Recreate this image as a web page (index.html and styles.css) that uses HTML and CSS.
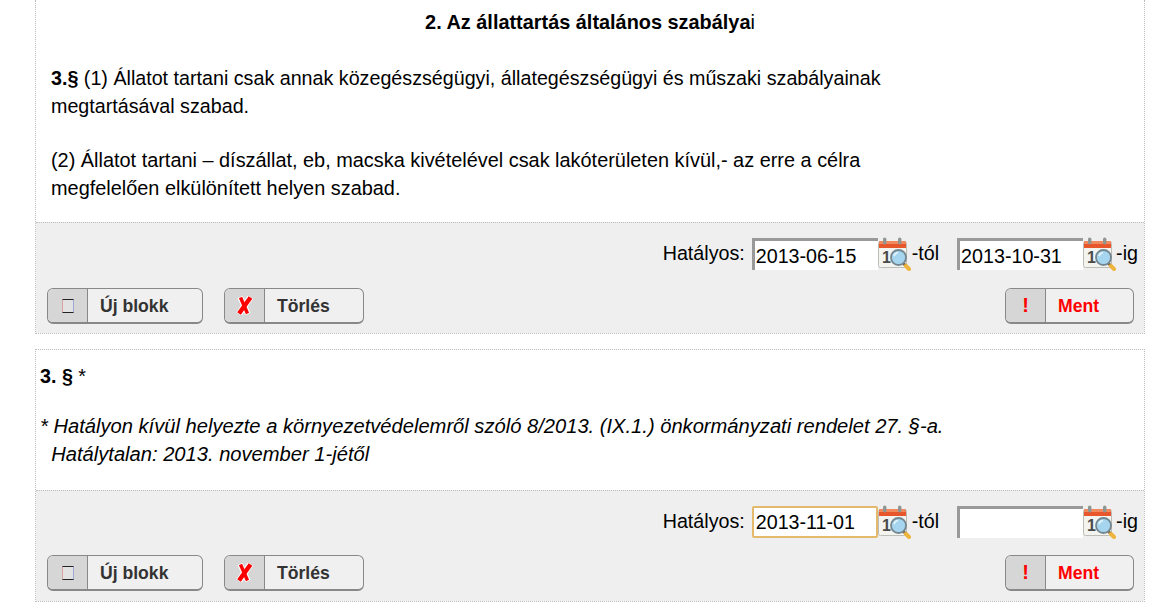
FILE: index.html
```html
<!DOCTYPE html>
<html lang="hu">
<head>
  <meta charset="UTF-8">
  <title>Rendelet szerkesztése</title>
  <link rel="stylesheet" href="styles.css">
</head>
<body>
  <svg class="defs" width="0" height="0">
    <symbol id="cal" viewBox="0 0 34 34">
      <rect x="0.5" y="4.5" width="28" height="26" rx="2" fill="#f3f3f0" stroke="#bdbdb8"/>
      <path d="M1 11V6a2 2 0 0 1 2-2h23a2 2 0 0 1 2 2v5z" fill="#e8562c"/>
      <path d="M1 6a2 2 0 0 1 2-2h23a2 2 0 0 1 2 2v1H1z" fill="#f08a5e"/>
      <rect x="5" y="0.5" width="3.4" height="7" rx="1.7" fill="#8f9590"/>
      <rect x="20" y="0.5" width="3.4" height="7" rx="1.7" fill="#8f9590"/>
    </symbol>
    <symbol id="lens" viewBox="0 0 34 34">
      <path d="M25 26l5 5" stroke="#7e6a45" stroke-width="3" stroke-linecap="round"/>
      <path d="M28 29l3 3" stroke="#efb43c" stroke-width="4" stroke-linecap="round"/>
      <circle cx="20.500" cy="20.500" r="7.500" fill="#a6d5ef" stroke="#74868f" stroke-width="1.800"/>
      <path d="M16 19a5 5 0 0 1 4-3.500" fill="none" stroke="#e6f5fc" stroke-width="1.600"/>
    </symbol>
    <symbol id="cross" viewBox="0 0 17 19">
      <path d="M14.500 1L3 18" fill="none" stroke="#fff" stroke-width="6.500"/>
      <path d="M4 1l8 17" fill="none" stroke="#fff" stroke-width="5.500"/>
      <path d="M14.500 1.500L3 17.500" fill="none" stroke="#f00" stroke-width="4.500"/>
      <path d="M4.500 1.500L11.500 17.500" fill="none" stroke="#f00" stroke-width="3.500"/>
    </symbol>
  </svg>

  <div class="page">
    <section class="block first">
      <div class="content">
        <h2 class="title">2. Az állattartás általános szabálya<span class="thin">i</span></h2>
        <p class="par1"><b>3.§</b> (1) Állatot tartani csak annak közegészségügyi, állategészségügyi és műszaki szabályainak<br>megtartásával szabad.</p>
        <p class="par2">(2) Állatot tartani – díszállat, eb, macska kivételével csak lakóterületen kívül,- az erre a célra<br>megfelelően elkülönített helyen szabad.</p>
      </div>
      <div class="toolbar">
        <div class="dates">
          <span class="lbl">Hatályos:</span>
          <input class="date" type="text" value="2013-06-15">
          <svg class="cal" viewBox="0 0 34 34"><use href="#cal"/><text x="4" y="26" class="cal-num">1</text><use href="#lens"/></svg>
          <span class="suffix">-tól</span>
          <input class="date second" type="text" value="2013-10-31">
          <svg class="cal" viewBox="0 0 34 34"><use href="#cal"/><text x="4" y="26" class="cal-num">1</text><use href="#lens"/></svg>
          <span class="suffix">-ig</span>
        </div>
        <div class="actions">
          <button class="btn new"><span class="ico"><span class="box"></span></span><span class="cap">Új blokk</span></button>
          <button class="btn del"><span class="ico"><svg class="cross"><use href="#cross"/></svg></span><span class="cap">Törlés</span></button>
          <button class="btn save"><span class="ico ex">!</span><span class="cap">Ment</span></button>
        </div>
      </div>
    </section>

    <section class="block last">
      <div class="content second-content">
        <p class="head"><b>3. §</b> *</p>
        <p class="note"><i>* Hatályon kívül helyezte a környezetvédelemről szóló 8/2013. (IX.1.) önkormányzati rendelet 27. §-a.<br>&nbsp;&nbsp;Hatálytalan: 2013. november 1-jétől</i></p>
      </div>
      <div class="toolbar">
        <div class="dates">
          <span class="lbl">Hatályos:</span>
          <input class="date focused" type="text" value="2013-11-01">
          <svg class="cal" viewBox="0 0 34 34"><use href="#cal"/><text x="4" y="26" class="cal-num">1</text><use href="#lens"/></svg>
          <span class="suffix">-tól</span>
          <input class="date second" type="text" value="">
          <svg class="cal" viewBox="0 0 34 34"><use href="#cal"/><text x="4" y="26" class="cal-num">1</text><use href="#lens"/></svg>
          <span class="suffix">-ig</span>
        </div>
        <div class="actions">
          <button class="btn new"><span class="ico"><span class="box"></span></span><span class="cap">Új blokk</span></button>
          <button class="btn del"><span class="ico"><svg class="cross"><use href="#cross"/></svg></span><span class="cap">Törlés</span></button>
          <button class="btn save"><span class="ico ex">!</span><span class="cap">Ment</span></button>
        </div>
      </div>
    </section>
  </div>
</body>
</html>
```

FILE: styles.css
```css
body {
  margin: 0;
  background: #fff;
  color: #000;
  font-family: "Liberation Sans", Arial, sans-serif;
  font-size: 19.7px;
  overflow: hidden;
}

.defs {
  display: block;
  height: 0;
}

.cal-num {
  font-family: "Liberation Sans", Arial, sans-serif;
  font-size: 16px;
  font-weight: bold;
  fill: #4a4a4a;
}

.page {
  width: 1110px;
  margin-left: 35px;
}

.block {
  border: 1px dotted #bbb;
  margin-bottom: 15px;
}

.block.first {
  border-top: none;
}

.content {
  height: 222px;
  padding: 0 15px;
  box-sizing: border-box;
  line-height: 28px;
}

.content p {
  margin: 0;
}

.title {
  margin: 0;
  padding: 8px 0 28px;
  font-size: 19.9px;
  line-height: 28px;
  text-align: center;
}

.thin {
  font-weight: normal;
}

.content .par1 {
  margin-bottom: 26px;
}

.par2 {
  font-size: 19.9px;
}

.second-content {
  height: 140px;
  padding: 12px 4px 0;
}

.second-content .head {
  margin-bottom: 22px;
}

.note {
  font-size: 20.15px;
}

.toolbar {
  height: 111px;
  box-sizing: border-box;
  background: #efefef;
  border-top: 1px dotted #bbb;
  padding: 14px 10px 0 11px;
}

.dates {
  display: flex;
  justify-content: flex-end;
  align-items: flex-start;
  height: 51px;
  margin-right: -4px;
  line-height: 33px;
}

.last .dates {
  height: 50px;
}

.lbl {
  margin-right: 7px;
}

.date {
  width: 126px;
  height: 32px;
  box-sizing: border-box;
  margin: 1px 0 0;
  padding: 1px 0 0 1px;
  border: 3px solid #999;
  border-right: none;
  border-bottom: none;
  background: #fff;
  font-family: "Liberation Sans", Arial, sans-serif;
  font-size: 19.7px;
  color: #000;
  outline: none;
}

.date.second {
  margin-left: 18px;
}

.date.second + .cal {
  margin-right: -1px;
}

.date.focused {
  border: 2px solid #e5b96b;
  border-radius: 2px;
  padding-left: 2px;
}

.cal {
  width: 34px;
  height: 34px;
}

.actions {
  display: flex;
  gap: 21px;
}

.btn {
  display: flex;
  align-items: stretch;
  height: 36px;
  padding: 0;
  border: 1px solid #888;
  border-bottom-width: 2px;
  border-radius: 6px;
  background: #f0f0f0;
  overflow: hidden;
  font-family: "Liberation Sans", Arial, sans-serif;
  font-size: 17.6px;
  font-weight: bold;
  color: #333;
}

.btn.new {
  width: 156px;
}

.btn.del {
  width: 140px;
}

.btn.save {
  width: 129px;
  margin-left: auto;
  color: #f00;
}

.ico {
  flex: none;
  width: 39px;
  display: flex;
  align-items: center;
  justify-content: center;
  background: #d6d6d6;
  border-right: 1px solid #888;
}

.box {
  width: 10px;
  height: 12px;
  border: 1px solid #222;
  border-left-color: #d9a0a0;
  border-right-color: #a0a8d9;
  background: #e2e2e2;
}

.cross {
  width: 17px;
  height: 19px;
}

.ico.ex {
  color: #f00;
  font-size: 20px;
}

.cap {
  flex: 1;
  line-height: 34px;
  padding-left: 12px;
  text-align: left;
}
```
